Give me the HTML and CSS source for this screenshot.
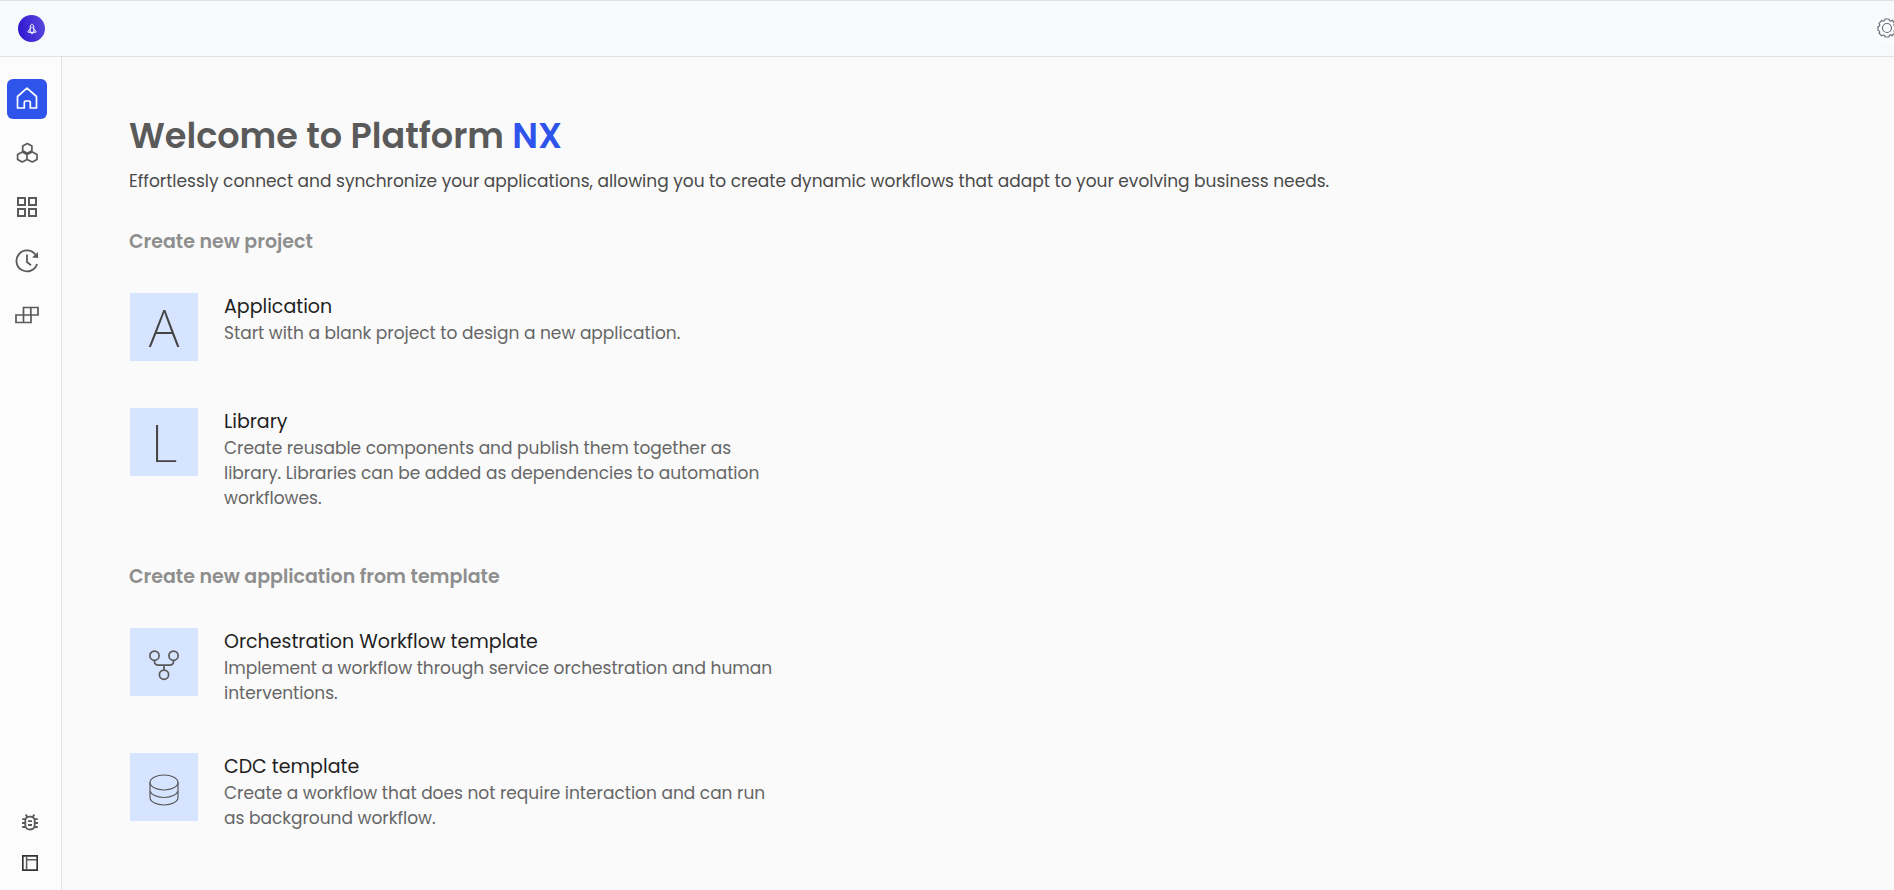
FILE: index.html
```html
<!DOCTYPE html>
<html lang="en">
<head>
<meta charset="utf-8">
<title>Platform NX</title>
<link rel="stylesheet" href="styles.css">
</head>
<body>
<header class="topbar">
  <a class="brand" href="#" aria-label="Platform NX">
    <svg width="10" height="12" viewBox="0 0 10 12" fill="none" stroke="#fff" stroke-width="1" stroke-linecap="round" stroke-linejoin="round"><path d="M3.200 9V4C3.200 2.600 4 1.500 5 1c1 .5 1.800 1.600 1.800 3v5zM3.200 6L1 8.300v.9h2.200M6.800 6L9 8.300v.9H6.800M4 9.200c0 1 .4 1.600 1 2 .6-.4 1-1 1-2M5 4v1"/></svg>
  </a>
  <button class="settings" type="button" aria-label="Settings">
    <svg width="20" height="20" viewBox="0 1 20 20" fill="none" stroke="#6a6d7c" stroke-width="1.200" stroke-linejoin="round"><circle cx="10" cy="10" r="4.500"/><path d="M8 1h4c.1 1.700 1 2.400 2.500 1.700l.9-.5 2.400 3.600c-1.300.9-1.300 2 .2 2.600l.9.3v3.200c-1.700.2-2.300 1.100-1.500 2.500l.4.800-3 2.600c-1-1.300-2.200-1.100-2.700.3L12 19H8c-.1-1.700-1-2.400-2.500-1.700l-.9.5-2.600-2.600c1.200-1.200.9-2.200-.5-2.700L1 12.300V8.600c1.700-.2 2.200-1.200 1.400-2.500l-.4-.8 2.800-3c1.200 1.200 2.500.9 2.900-.4z"/></svg>
  </button>
</header>
<div class="shell">
  <nav class="sidebar" aria-label="Main">
    <div class="nav-group">
      <a class="nav-item active" href="#" aria-label="Home"><svg width="22" height="22" viewBox="0 1 22 22" overflow="visible" fill="none" stroke="#fff" stroke-width="1.700" stroke-linejoin="round"><path d="M1.500 9.500L11 1.200 20.500 9.500V21H14.300v-5.500a1.500 1.500 0 0 0-1.500-1.500H9.800a1.500 1.500 0 0 0-1.500 1.500V21H1.500z"/></svg></a>
      <a class="nav-item" href="#" aria-label="Modules"><svg width="22" height="22" viewBox="0 0 22 22" fill="none" stroke="#5a5a5a" stroke-width="1.700" stroke-linejoin="round"><path d="M11.300 1.500l4.600 2.500v4.800l-4.600 2.500-4.600-2.500V4zM6.300 10l4.700 2.500v4.900L6.300 20l-4.700-2.600v-4.900zM16.300 10l4.700 2.500v4.900L16.300 20l-5.300-2.600v-4.900z"/></svg></a>
      <a class="nav-item" href="#" aria-label="Dashboard"><svg width="22" height="22" viewBox="0 0 22 22" fill="none" stroke="#5a5a5a" stroke-width="2"><path d="M2 2h7v7H2zM13 2h7v7h-7zM2 13h7v7H2zM13 13h7v7h-7z"/></svg></a>
      <a class="nav-item" href="#" aria-label="History"><svg width="24" height="24" viewBox="0 0 24 24" fill="none" stroke="#5a5a5a" stroke-width="1.800"><path d="M20.300 5.500A10.500 10.500 0 1 0 22 15M12 5.500V13l4 3.200"/><path d="M23 3v6l-6-.6z" fill="#5a5a5a" stroke="none"/></svg></a>
      <a class="nav-item" href="#" aria-label="Blocks"><svg width="24" height="18" viewBox="0 0 24 18" fill="none" stroke="#5a5a5a" stroke-width="1.700"><path d="M8.500 1.500h14.500V9H8.500zM1 9h15v7.500H1zM15.800 1.500V9M8.500 9v7.500"/></svg></a>
    </div>
    <div class="nav-group nav-bottom">
      <a class="nav-item small" href="#" aria-label="Debug"><svg width="18" height="18" viewBox="0 1 18 18" fill="none" stroke="#5a5a5a" stroke-width="1.800"><path d="M4.300 7.500C4.300 5 6.200 3.700 9 3.700s4.700 1.300 4.700 3.800V12c0 2.800-2 4.500-4.700 4.500S4.300 14.800 4.300 12zM6.600 4.500L4.700 1.500M11.400 4.500l1.900-3M1.200 6.200h3.500M13.300 6.200h3.500M1 10h3.300M13.700 10H17M1.200 14h3.500M13.300 14h3.500M7 8.200h4M7 12h4"/></svg></a>
      <a class="nav-item small" href="#" aria-label="Layout"><svg width="16" height="16" viewBox="0 0 16 16" fill="none" stroke="#333"><path d="M.8.800h14.400v14.400H.8z" stroke-width="1.700"/><path d="M4.600 1v14M4.600 4.700H15" stroke="#5a5a5a" stroke-width="1.500"/></svg></a>
    </div>
  </nav>
  <main class="content">
    <h1>Welcome to Platform <span class="accent">NX</span></h1>
    <p class="lead">Effortlessly connect and synchronize your applications, allowing you to create dynamic workflows that adapt to your evolving business needs.</p>
    <section>
      <h2>Create new project</h2>
      <div class="cards">
        <a class="card" href="#"><span class="tile">A</span><span class="card-text"><strong>Application</strong><span>Start with a blank project to design a new application.</span></span></a>
        <a class="card" href="#"><span class="tile">L</span><span class="card-text"><strong>Library</strong><span>Create reusable components and publish them together as library. Libraries can be added as dependencies to automation workflowes.</span></span></a>
      </div>
    </section>
    <section>
      <h2>Create new application from template</h2>
      <div class="cards">
        <a class="card" href="#"><span class="tile"><svg width="32" height="38" viewBox="0 -7 32 38" fill="none" stroke="#5a5a5a" stroke-width="1.700"><circle cx="6.500" cy="5.700" r="4.600"/><circle cx="25.500" cy="5.700" r="4.600"/><circle cx="16" cy="24.700" r="4.600"/><path d="M6.500 10.300v1.400a3.500 3.500 0 0 0 3.500 3.500h12a3.500 3.500 0 0 0 3.500-3.500v-1.400M16 15.200v4.900"/></svg></span><span class="card-text"><strong>Orchestration Workflow template</strong><span>Implement a workflow through service orchestration and human interventions.</span></span></a>
        <a class="card" href="#"><span class="tile"><svg width="32" height="38" viewBox="0 -6 32 38" fill="none" stroke="#5a5a5a" stroke-width="1.200"><ellipse cx="16" cy="8.500" rx="14" ry="7.500"/><path d="M2 8.500V23.500c0 4.200 6.200 7.500 14 7.500s14-3.300 14-7.500V8.500M2 16c0 4.200 6.200 7.500 14 7.500s14-3.300 14-7.500"/></svg></span><span class="card-text"><strong>CDC template</strong><span>Create a workflow that does not require interaction and can run as background workflow.</span></span></a>
      </div>
    </section>
  </main>
</div>
</body>
</html>
```
FILE: styles.css
```css
* { box-sizing: border-box; }
body {
  margin: 0;
  min-height: 100vh;
  display: flex;
  flex-direction: column;
  background: #fafafa;
  color: #5a5a5a;
  font-family: Poppins, Inter, sans-serif;
  font-size: 17px;
  overflow-x: hidden;
}
a { color: inherit; text-decoration: none; }
svg { display: block; }
h1, h2, p { margin: 0; font-weight: 600; }

.topbar {
  height: 57px;
  padding-left: 18px;
  display: flex;
  align-items: center;
  justify-content: space-between;
  overflow: hidden;
  background: #f7f9fb;
  border-top: 1px solid #e0e0e0;
  border-bottom: 1px solid #e2e2e2;
}
.brand {
  width: 27px;
  height: 27px;
  display: grid;
  place-items: center;
  border-radius: 50%;
  background: linear-gradient(80deg, #2d14cf, #5a4ade);
}
.settings {
  width: 28px;
  height: 28px;
  margin-right: -7px;
  padding: 0;
  flex: none;
  display: grid;
  place-items: center;
  border: 0;
  border-radius: 50%;
  background: #fbfcfd;
}
.settings svg { overflow: visible; }

.shell { flex: 1; display: flex; }
.sidebar {
  width: 62px;
  flex: none;
  padding: 22px 0 12px;
  display: flex;
  flex-direction: column;
  justify-content: space-between;
  background: #fcfcfc;
  border-right: 1px solid #e2e2e2;
}
.nav-group {
  padding-left: 7px;
  display: flex;
  flex-direction: column;
  gap: 14px;
}
.nav-item {
  width: 40px;
  height: 40px;
  display: grid;
  place-items: center;
  border-radius: 6px;
}
.nav-item.active { background: #2f54eb; }
.nav-bottom { padding-left: 15px; gap: 10px; }
.nav-item.small { width: 30px; height: 30px; }

.content { flex: 1; padding: 57px 67px 40px; }
h1 { font-size: 35px; line-height: 44px; }
.accent { color: #2f54eb; }
.lead {
  margin: 10px 0 35px;
  color: #4a4a4a;
  font-weight: 400;
  line-height: 26px;
}
h2 {
  margin-bottom: 38px;
  color: #8e8e8e;
  font-size: 19px;
  line-height: 26px;
}
section + section { margin-top: 53px; }
.cards {
  padding-left: 1px;
  display: flex;
  flex-direction: column;
  align-items: flex-start;
  gap: 47px;
}
.card { display: flex; align-items: flex-start; gap: 26px; }
.tile {
  width: 68px;
  height: 68px;
  flex: none;
  display: grid;
  place-items: center;
  background: #d6e4ff;
  color: #444;
  font: 200 52px/66px "Noto Sans", sans-serif;
}
.card-text {
  max-width: 555px;
  display: flex;
  flex-direction: column;
  color: #666;
  line-height: 25px;
}
.card-text strong {
  color: #1f1f1f;
  font-size: 19px;
  font-weight: 400;
  line-height: 28px;
}
```
